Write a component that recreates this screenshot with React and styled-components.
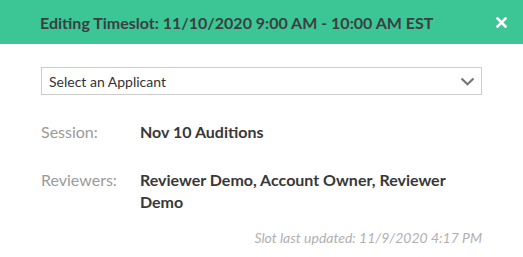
import styled, { createGlobalStyle } from "styled-components";

const GLOBAL = createGlobalStyle`
    html, body {
        margin: 0;
        padding: 0;
        background: #ffffff;
        font-family: Lato, "Open Sans", sans-serif;
    }
`

const MODAL = styled.div`
    width: 523px;
    height: 257px;
    display: flex;
    flex-direction: column;
    background: #ffffff;
`

const HEADER = styled.div`
    height: 44px;
    display: flex;
    align-items: center;
    justify-content: space-between;
    padding: 0 14px 0 40px;
    background: #3cc695;
`

const TITLE = styled.h2`
    margin: 0;
    font-size: 16px;
    font-weight: 700;
    color: #3b3f42;
`

const CLOSE = styled.button`
    width: 16px;
    height: 16px;
    display: flex;
    align-items: center;
    justify-content: center;
    padding: 0;
    border: none;
    background: none;
    cursor: pointer;
`

const BODY = styled.div`
    display: flex;
    flex-direction: column;
    padding: 23px 41px 0 41px;
`

const SELECT = styled.div`
    height: 28px;
    box-sizing: border-box;
    display: flex;
    align-items: center;
    justify-content: space-between;
    padding: 0 6px 0 7px;
    border: 1px solid #cccccc;
    font-size: 14px;
    color: #333333;
`

const DETAILS = styled.dl`
    display: grid;
    grid-template-columns: 99px 1fr;
    row-gap: 26px;
    margin: 26px 0 0 0;
    font-size: 16px;
    line-height: 22px;
`

const LABEL = styled.dt`
    color: #9a9a9a;
`

const VALUE = styled.dd`
    margin: 0;
    font-weight: 700;
    color: #383838;
`

const FOOTNOTE = styled.p`
    margin: 16px 0 0 0;
    text-align: right;
    font-size: 14px;
    font-style: italic;
    color: #b0b0b0;
`

function App () {

    const details = [
        {label: "Session:", value: "Nov 10 Auditions"},
        {label: "Reviewers:", value: "Reviewer Demo, Account Owner, Reviewer Demo"}
    ]

    return (
        <MODAL>
            <GLOBAL />
            <HEADER>
                <TITLE>Editing Timeslot: 11/10/2020 9:00 AM - 10:00 AM EST</TITLE>
                <CLOSE aria-label = "Close">
                    <svg width = "11" height = "11" viewBox = "0 0 11 11">
                        <path d = "M1.5 1.5 L9.5 9.5 M9.5 1.5 L1.5 9.5" stroke = "#ffffff" strokeWidth = "2.6" strokeLinecap = "square" />
                    </svg>
                </CLOSE>
            </HEADER>
            <BODY>
                <SELECT>
                    <span>Select an Applicant</span>
                    <svg width = "15" height = "9" viewBox = "0 0 15 9">
                        <path d = "M1.5 1.5 L7.5 7.2 L13.5 1.5" fill = "none" stroke = "#777777" strokeWidth = "2.2" />
                    </svg>
                </SELECT>
                <DETAILS>
                    {details.map((item) => (
                        <>
                            <LABEL key = {item.label + "-l"}>{item.label}</LABEL>
                            <VALUE key = {item.label + "-v"}>{item.value}</VALUE>
                        </>
                    ))}
                </DETAILS>
                <FOOTNOTE>Slot last updated: 11/9/2020 4:17 PM</FOOTNOTE>
            </BODY>
        </MODAL>
    )
}

export default App
